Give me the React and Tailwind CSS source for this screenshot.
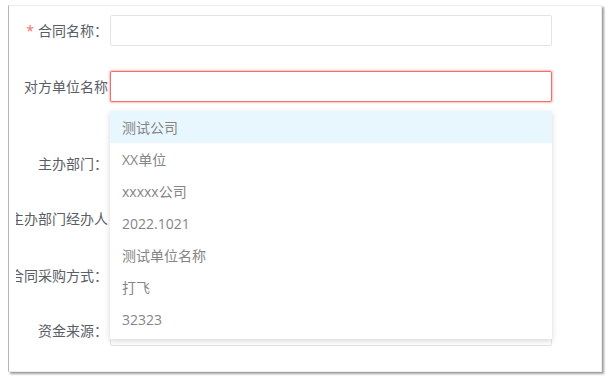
const items = ["测试公司", "XX单位", "xxxxx公司", "2022.1021", "测试单位名称", "打飞", "32323"];

const Row = ({ label, required, children, className }) => (
  <div className={`flex h-[31px] items-center ${className}`}>
    <div className="flex w-[94px] shrink-0 justify-end overflow-hidden whitespace-nowrap pr-[2px] text-[14px] text-[#5a5e66]">
      {required && <span className="mr-[4px] text-[#f56c6c]">*</span>}
      <span>{label}</span>
    </div>
    {children}
  </div>
);

const Input = ({ error }) => (
  <div
    className={`h-[31px] w-[442px] shrink-0 rounded-[2px] bg-white ${
      error
        ? "border border-[#ef6f6f] shadow-[0_0_2px_1px_rgba(245,108,108,0.45)]"
        : "border border-[#e1e3e8]"
    }`}
  />
);

export default function App() {
  return (
    <div
      className="h-[381px] w-[610px] bg-white pl-[8px] pt-[5px]"
      style={{ fontFamily: '"Open Sans", "Noto Sans CJK SC", sans-serif' }}
    >
      <div className="h-[367px] w-[594px] border border-[#ececec] border-l-[#b5b5b5] bg-white shadow-[2px_2px_2px_rgba(0,0,0,0.38)]">
        <div className="relative ml-[7px] overflow-hidden pt-[9px]">
          <Row label="合同名称：" required>
            <Input />
          </Row>

          <div className="relative mt-[25px]">
            <Row label="对方单位名称">
              <Input error />
            </Row>
            <div className="absolute left-[94px] top-[40px] z-10 w-[442px] bg-white pb-[4px] shadow-[0_2px_6px_rgba(0,0,0,0.16)]">
              {items.map((item, i) => (
                <div
                  key={item}
                  className={`flex h-[32px] items-center px-[12px] text-[14px] text-[#858585] ${
                    i === 0 ? "bg-[#e8f6fe]" : ""
                  }`}
                >
                  {item}
                </div>
              ))}
            </div>
          </div>

          <Row label="主办部门：" className="mt-[46px]">
            <Input />
          </Row>
          <Row label="主办部门经办人" className="mt-[24px]">
            <Input />
          </Row>
          <Row label="合同采购方式：" className="mt-[26px]">
            <Input />
          </Row>
          <Row label="资金来源：" className="mt-[24px]">
            <Input />
          </Row>
        </div>
      </div>
    </div>
  );
}
